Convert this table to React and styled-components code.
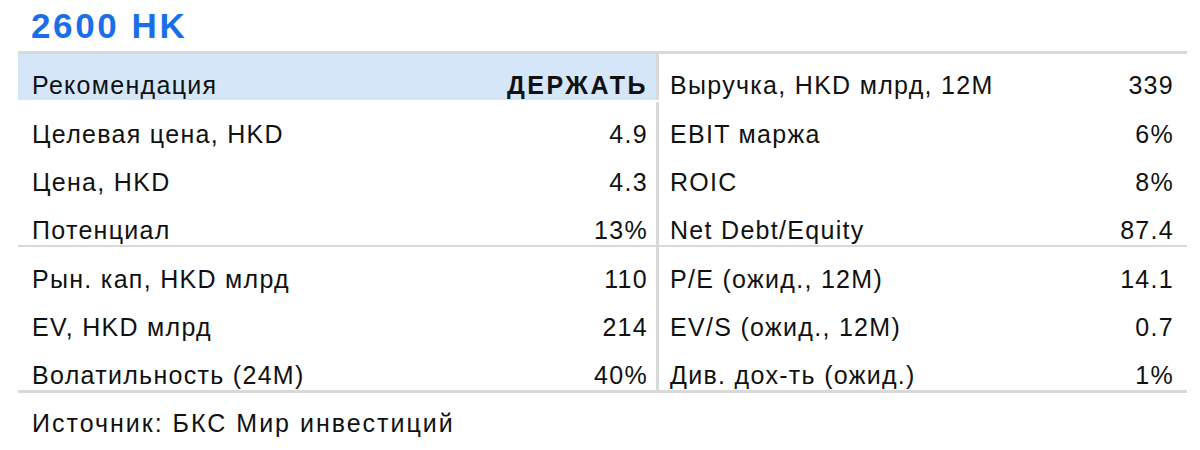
import React from 'react';
import styled, { createGlobalStyle } from 'styled-components';

const GlobalStyle = createGlobalStyle`
  html, body {
    margin: 0;
    padding: 0;
    background: #ffffff;
  }
  body {
    font-family: "Liberation Sans", Arial, sans-serif;
    color: #111111;
  }
`;

const topRows = [
  { label: 'Рекомендация', value: 'ДЕРЖАТЬ', accent: true, rLabel: 'Выручка, HKD млрд, 12M', rValue: '339' },
  { label: 'Целевая цена, HKD', value: '4.9', rLabel: 'EBIT маржа', rValue: '6%' },
  { label: 'Цена, HKD', value: '4.3', rLabel: 'ROIC', rValue: '8%' },
  { label: 'Потенциал', value: '13%', rLabel: 'Net Debt/Equity', rValue: '87.4' },
];

const bottomRows = [
  { label: 'Рын. кап, HKD млрд', value: '110', rLabel: 'P/E (ожид., 12M)', rValue: '14.1' },
  { label: 'EV, HKD млрд', value: '214', rLabel: 'EV/S (ожид., 12M)', rValue: '0.7' },
  { label: 'Волатильность (24M)', value: '40%', rLabel: 'Див. дох-ть (ожид.)', rValue: '1%' },
];

function App() {
  return (
    <Page>
      <GlobalStyle />
      <Title>2600 HK</Title>
      <Table>
        <Section>
          {topRows.map((row, i) => (
            <React.Fragment key={row.label}>
              <LeftCell $accent={row.accent} $first={i === 0}>
                <Label>{row.label}</Label>
                <Value $bold={row.accent}>{row.value}</Value>
              </LeftCell>
              <RightCell $first={i === 0}>
                <Label>{row.rLabel}</Label>
                <Value>{row.rValue}</Value>
              </RightCell>
            </React.Fragment>
          ))}
        </Section>
        <Section $bottom>
          {bottomRows.map((row) => (
            <React.Fragment key={row.label}>
              <LeftCell>
                <Label>{row.label}</Label>
                <Value>{row.value}</Value>
              </LeftCell>
              <RightCell>
                <Label>{row.rLabel}</Label>
                <Value>{row.rValue}</Value>
              </RightCell>
            </React.Fragment>
          ))}
        </Section>
      </Table>
      <Source>Источник: БКС Мир инвестиций</Source>
    </Page>
  );
}

const Page = styled.div`
  width: 1200px;
  height: 450px;
  padding-top: 8px;
  box-sizing: border-box;
`;

const Title = styled.h1`
  margin: 0 0 0 31px;
  font-size: 35px;
  line-height: 35px;
  font-weight: 700;
  letter-spacing: 2.6px;
  color: #1a6fe8;
`;

const Table = styled.div`
  margin: 8px 0 0 18px;
  width: 1169px;
  border-top: 3px solid #d9d9d9;
  border-bottom: 3px solid #d9d9d9;
`;

const Section = styled.div`
  display: grid;
  grid-template-columns: 641px 528px;
  grid-auto-rows: 47.7px;
  border-top: ${(p) => (p.$bottom ? '2px solid #d9d9d9' : 'none')};
`;

const Cell = styled.div`
  display: flex;
  justify-content: space-between;
  align-items: flex-end;
  padding-bottom: 2px;
  box-sizing: border-box;
  font-size: 25px;
  line-height: 25px;
  letter-spacing: 1.3px;
`;

const LeftCell = styled(Cell)`
  padding-left: 14px;
  padding-right: 8px;
  border-right: 3px solid #d9d9d9;
  background: ${(p) => (p.$accent ? '#d4e6f8' : 'transparent')};
  height: ${(p) => (p.$first ? '46px' : 'auto')};
`;

const RightCell = styled(Cell)`
  padding-left: 11px;
  padding-right: 13px;
  height: ${(p) => (p.$first ? '46px' : 'auto')};
`;

const Label = styled.span`
  white-space: nowrap;
`;

const Value = styled.span`
  white-space: nowrap;
  font-weight: ${(p) => (p.$bold ? 700 : 400)};
  letter-spacing: ${(p) => (p.$bold ? '2.5px' : '1.3px')};
`;

const Source = styled.div`
  margin: 18px 0 0 32px;
  font-size: 25px;
  line-height: 25px;
  letter-spacing: 2px;
`;

export default App;
